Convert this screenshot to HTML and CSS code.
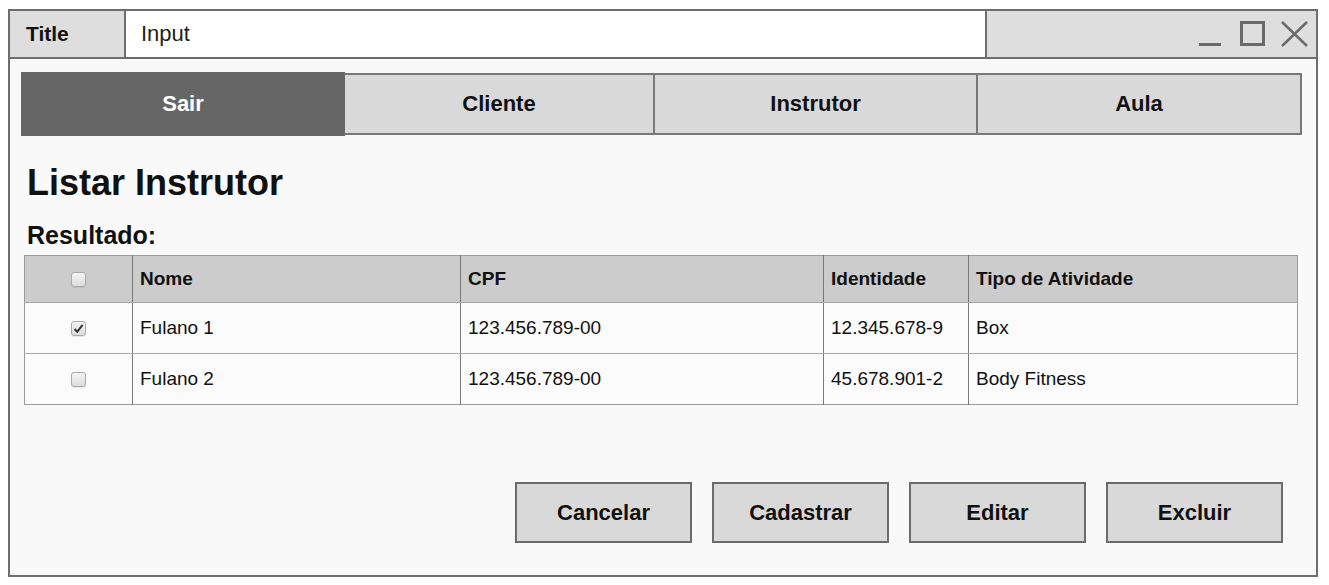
FILE: index.html
```html
<!DOCTYPE html>
<html lang="pt">
<head>
<meta charset="utf-8">
<title>Listar Instrutor</title>
<link rel="stylesheet" href="styles.css">
</head>
<body>
<div class="window">
  <div class="titlebar">
    <div class="tb-title">Title</div>
    <div class="tb-input">Input</div>
    <div class="tb-controls">
      <svg class="ctl" width="120" height="30" viewBox="0 0 120 30" aria-hidden="true">
        <line x1="12" y1="24.5" x2="34" y2="24.5" stroke="#6a6a6a" stroke-width="3"/>
        <rect x="54.5" y="2.5" width="22" height="22" fill="none" stroke="#6a6a6a" stroke-width="3"/>
        <path d="M95 2 L120 26 M120 2 L95 26" stroke="#6a6a6a" stroke-width="2.5" fill="none"/>
      </svg>
    </div>
  </div>
  <div class="content">
    <nav class="tabs">
      <div class="tab tab-active">Sair</div>
      <div class="tab">Cliente</div>
      <div class="tab">Instrutor</div>
      <div class="tab">Aula</div>
    </nav>
    <h1 class="heading">Listar Instrutor</h1>
    <h2 class="subheading">Resultado:</h2>
    <table class="grid">
      <colgroup>
        <col class="c-check"><col class="c-nome"><col class="c-cpf"><col class="c-id"><col>
      </colgroup>
      <thead>
        <tr>
          <th class="cell-check"><span class="cb"></span></th>
          <th>Nome</th>
          <th>CPF</th>
          <th>Identidade</th>
          <th>Tipo de Atividade</th>
        </tr>
      </thead>
      <tbody>
        <tr class="r1">
          <td class="cell-check"><span class="cb"><svg width="11" height="11" viewBox="0 0 11 11" aria-hidden="true"><path d="M1.5 6 L4.2 8.8 L9.6 1.8" stroke="#333" stroke-width="2" fill="none"/></svg></span></td>
          <td>Fulano 1</td>
          <td>123.456.789-00</td>
          <td>12.345.678-9</td>
          <td>Box</td>
        </tr>
        <tr class="r2">
          <td class="cell-check"><span class="cb"></span></td>
          <td>Fulano 2</td>
          <td>123.456.789-00</td>
          <td>45.678.901-2</td>
          <td>Body Fitness</td>
        </tr>
      </tbody>
    </table>
    <div class="actions">
      <button class="btn">Cancelar</button>
      <button class="btn">Cadastrar</button>
      <button class="btn">Editar</button>
      <button class="btn">Excluir</button>
    </div>
  </div>
</div>
</body>
</html>
```

FILE: styles.css
```css
html, body {
  margin: 0;
  padding: 0;
  background: #ffffff;
  font-family: "Liberation Sans", Arial, sans-serif;
  color: #111;
}

.window {
  margin: 9px 0 0 8px;
  width: 1310px;
  height: 568px;
  box-sizing: border-box;
  border: 2px solid #6e6e6e;
  display: flex;
  flex-direction: column;
  background: #f9f9f9;
}

.titlebar {
  display: flex;
  height: 48px;
  box-sizing: border-box;
  border-bottom: 2px solid #6e6e6e;
  background: #dedede;
  flex: none;
}

.tb-title {
  width: 116px;
  box-sizing: border-box;
  border-right: 2px solid #6e6e6e;
  padding-left: 16px;
  display: flex;
  align-items: center;
  font-weight: bold;
  font-size: 21px;
}

.tb-input {
  width: 861px;
  box-sizing: border-box;
  border-right: 2px solid #6e6e6e;
  background: #ffffff;
  padding-left: 15px;
  display: flex;
  align-items: center;
  font-size: 22px;
  color: #222;
}

.tb-controls {
  flex: 1;
  display: flex;
  justify-content: flex-end;
  align-items: flex-start;
  padding: 9px 9px 0 0;
}

.ctl {
  display: block;
  overflow: visible;
}

.content {
  flex: 1;
  display: flex;
  flex-direction: column;
  padding: 14px 14px 32px 11px;
}

.tabs {
  display: grid;
  grid-template-columns: 324px 310px 323px 1fr;
  height: 62px;
  flex: none;
}

.tab {
  display: flex;
  align-items: center;
  justify-content: center;
  background: #d9d9d9;
  border: 2px solid #787878;
  border-left: none;
  font-weight: bold;
  font-size: 22px;
  color: #111;
}

.tab-active {
  background: #666666;
  color: #ffffff;
  border: none;
  margin: -1px 0;
}

.heading {
  margin: 29px 0 0 6px;
  font-size: 36px;
  line-height: 37px;
  font-weight: bold;
  color: #111;
}

.subheading {
  margin: 22px 0 0 6px;
  font-size: 25px;
  line-height: 25px;
  font-weight: bold;
  color: #111;
}

.grid {
  margin: 7px 0 0 3px;
  width: 1274px;
  border-collapse: collapse;
  table-layout: fixed;
  font-size: 19px;
  border: 1px solid #9a9a9a;
}

.c-check { width: 108px; }
.c-nome { width: 328px; }
.c-cpf { width: 363px; }
.c-id { width: 145px; }

.grid th,
.grid td {
  text-align: left;
  padding: 0 0 0 7px;
  border-left: 1px solid #7a7a7a;
  color: #111;
  white-space: nowrap;
}

.grid th {
  background: #cccccc;
  height: 46px;
  font-weight: bold;
  border-bottom: 1px solid #a8a8a8;
}

.grid td {
  background: #fbfbfb;
  height: 50px;
  font-weight: normal;
}

.grid .r1 td {
  border-bottom: 1px solid #a8a8a8;
}

.grid .cell-check {
  text-align: center;
  padding: 0;
  border-left: none;
}

.cb {
  display: inline-flex;
  align-items: center;
  justify-content: center;
  width: 13px;
  height: 13px;
  border: 1px solid #aaaaaa;
  border-radius: 3px;
  background: linear-gradient(#f4f4f4, #dcdcdc);
  vertical-align: middle;
  box-shadow: 0 1px 1px rgba(0,0,0,0.08);
}

.actions {
  margin-top: auto;
  display: flex;
  justify-content: flex-end;
  gap: 20px;
  padding-right: 19px;
}

.btn {
  width: 177px;
  height: 61px;
  box-sizing: border-box;
  border: 2px solid #6b6b6b;
  background: #d9d9d9;
  font-family: "Liberation Sans", Arial, sans-serif;
  font-weight: bold;
  font-size: 22px;
  color: #111;
  padding: 0;
}
```
